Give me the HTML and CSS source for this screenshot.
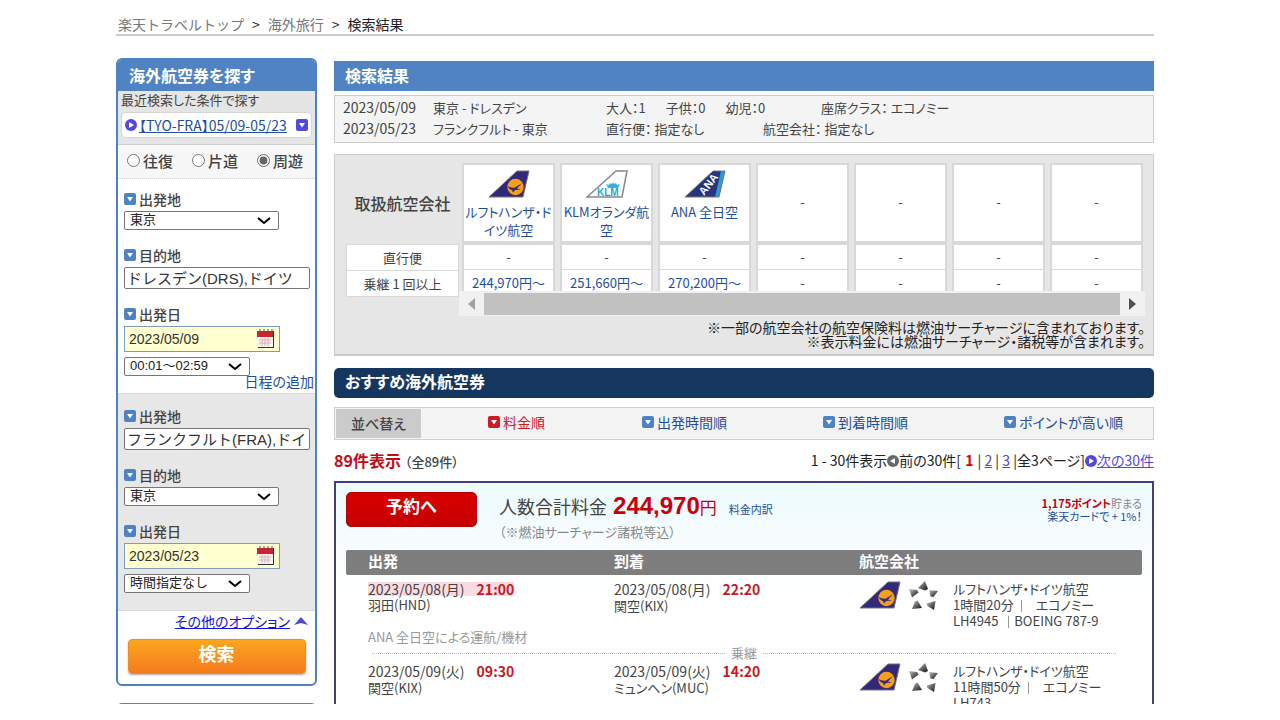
FILE: index.html
```html
<!DOCTYPE html>
<html lang="ja">
<head>
<meta charset="utf-8">
<title>検索結果</title>
<link rel="stylesheet" href="styles.css">
</head>
<body>
<svg class="defs" width="0" height="0" aria-hidden="true">
  <defs>
    <linearGradient id="metal" x1="0" y1="0" x2="1" y2="1"><stop offset="0" stop-color="#ccc"/><stop offset=".5" stop-color="#666"/><stop offset="1" stop-color="#111"/></linearGradient>
    <symbol id="down" viewBox="0 0 12 12"><rect width="12" height="12" rx="2" fill="currentColor"/><path d="M3 4h6L6 8.500z" fill="#fff"/></symbol>
    <symbol id="play" viewBox="0 0 12 12"><circle cx="6" cy="6" r="6" fill="currentColor"/><path d="M4 3v6l5-3z" fill="#fff"/></symbol>
    <symbol id="lh" viewBox="0 0 42 28"><path d="M1 27 29 1h12l-6 26z" fill="#32297b" stroke="#77737c"/><circle cx="27.500" cy="17" r="8.200" fill="#f6a01a"/><path d="M19.500 16c3 1.500 5 2 7.500 1.500l7-4.500-5 5.500 4 1-6 .5-2 2.500-1-2.500c-2-.5-3.500-2-4.500-4z" fill="#32297b"/></symbol>
    <symbol id="star" viewBox="0 0 30 30"><g fill="url(#metal)"><path d="M16 0 9 7l7 2.500 3-1.500z"/><path d="m29 10-9-1 1.500 6.500 3 .5z"/><path d="m25 29 1.500-9-9 2.500 1 2.500z"/><path d="m3 28 10-1-4.500-7.500L6 20.500z"/><path d="m0 8 3 8.500 6.500-5-1.500-2.500z"/></g></symbol>
    <symbol id="cal" viewBox="0 0 18 20"><path d="M1 2h16v17H1z" fill="#333"/><path d="M0 2h16v16H0z" fill="#f7f3f3"/><path d="M0 2h16v6H0z" fill="#d3202c"/><path d="M3 0v4M7 0v4M11 0v4M15 0v4" stroke="#555"/><path d="M2 11h12M2 14h12M5 9v8M8 9v8M11 9v8" stroke="#d9b4b4"/></symbol>
  </defs>
</svg>
<div class="page">
  <nav class="crumbs"><a href="#">楽天トラベルトップ</a><span>&gt;</span><a href="#">海外旅行</a><span>&gt;</span><span>検索結果</span></nav>
  <div class="columns">
    <aside class="side">
      <form class="search">
        <h2 class="search-title">海外航空券を探す</h2>
        <div class="recent">
          <p>最近検索した条件で探す</p>
          <div class="recent-box"><svg class="ico violet"><use href="#play"/></svg><a href="#">【TYO-FRA】05/09-05/23</a><svg class="ico violet"><use href="#down"/></svg></div>
        </div>
        <div class="trip">
          <label><input type="radio" name="trip">往復</label>
          <label><input type="radio" name="trip">片道</label>
          <label><input type="radio" name="trip" checked>周遊</label>
        </div>
        <section class="leg">
          <label class="cap" for="from1"><svg class="ico"><use href="#down"/></svg>出発地</label>
          <select id="from1" class="city"><option>東京</option></select>
          <label class="cap" for="to1"><svg class="ico"><use href="#down"/></svg>目的地</label>
          <input id="to1" class="place" type="text" value="ドレスデン(DRS),ドイツ">
          <label class="cap" for="date1"><svg class="ico"><use href="#down"/></svg>出発日</label>
          <div class="date"><input id="date1" type="text" value="2023/05/09"><button type="button" aria-label="カレンダー"><svg width="18" height="20"><use href="#cal"/></svg></button></div>
          <select class="time" aria-label="時間"><option>00:01～02:59</option></select>
          <a class="add" href="#">日程の追加</a>
        </section>
        <section class="leg second">
          <label class="cap" for="from2"><svg class="ico"><use href="#down"/></svg>出発地</label>
          <input id="from2" class="place" type="text" value="フランクフルト(FRA),ドイツ">
          <label class="cap" for="to2"><svg class="ico"><use href="#down"/></svg>目的地</label>
          <select id="to2" class="city"><option>東京</option></select>
          <label class="cap" for="date2"><svg class="ico"><use href="#down"/></svg>出発日</label>
          <div class="date"><input id="date2" type="text" value="2023/05/23"><button type="button" aria-label="カレンダー"><svg width="18" height="20"><use href="#cal"/></svg></button></div>
          <select class="time" aria-label="時間"><option>時間指定なし</option></select>
        </section>
        <div class="options"><a href="#">その他のオプション</a><svg width="14" height="8" viewBox="0 0 14 8"><path d="M0 8 7 0l7 8-7-2z" fill="#5148d0"/></svg></div>
        <button class="go" type="button">検索</button>
      </form>
      <div class="next-box"></div>
    </aside>
    <main class="main">
      <h1 class="bar">検索結果</h1>
      <div class="info">
        <div class="info-row"><span class="c1">2023/05/09</span><span class="c2">東京 - ドレスデン</span><span class="people"><span>大人：1</span><span>子供：0</span><span>幼児：0</span></span><span>座席クラス： エコノミー</span></div>
        <div class="info-row"><span class="c1">2023/05/23</span><span class="c2">フランクフルト - 東京</span><span class="direct">直行便： 指定なし</span><span>航空会社： 指定なし</span></div>
      </div>
      <section class="fares">
        <div class="fare-cols">
          <table class="heads"><tr><th class="big">取扱航空会社</th></tr><tr><th>直行便</th></tr><tr><th>乗継 1 回以上</th></tr></table>
          <div class="scroller">
            <div class="clip">
              <table class="grid">
                <tr class="logos">
                  <td><svg width="42" height="28"><use href="#lh"/></svg><a href="#">ルフトハンザ・ド<br>イツ航空</a></td>
                  <td><svg width="42" height="28" viewBox="0 0 42 28"><path d="M1 27 30 1h11l-5 26z" fill="#fff" stroke="#888" stroke-width="1.500"/><text x="11" y="26" class="klm">KLM</text><path d="m22 18-2-4 3 1 1-2 2 1 1-2 1 2 2-1 1 2 3-1-2 4z" fill="#36b0e2"/></svg><a href="#">KLMオランダ航<br>空</a></td>
                  <td><svg width="42" height="28" viewBox="0 0 42 28"><path d="M1 27 29 1h12l-6 26z" fill="#27347e"/><path d="M37 1h4l-6 26h-4z" fill="#2a9bd8"/><path d="M1 27 29 1h12l-6 26z" fill="none" stroke="#777"/><text class="ana" transform="translate(20 26) rotate(-52)">ANA</text></svg><a href="#">ANA 全日空</a></td>
                  <td class="none">-</td><td class="none">-</td><td class="none">-</td><td class="none">-</td>
                </tr>
                <tr class="row"><td>-</td><td>-</td><td>-</td><td>-</td><td>-</td><td>-</td><td>-</td></tr>
                <tr class="row last"><td><a href="#">244,970円～</a></td><td><a href="#">251,660円～</a></td><td><a href="#">270,200円～</a></td><td>-</td><td>-</td><td>-</td><td>-</td></tr>
              </table>
            </div>
            <div class="track"><svg class="arrow" viewBox="0 0 7 12"><path d="M7 0v12L0 6z" fill="#a3a3a3"/></svg><div class="thumb"></div><svg class="arrow" viewBox="0 0 7 12"><path d="M0 0v12l7-6z" fill="#505050"/></svg></div>
          </div>
        </div>
        <p class="notes">※一部の航空会社の航空保険料は燃油サーチャージに含まれております。<br>※表示料金には燃油サーチャージ・諸税等が含まれます。</p>
      </section>
      <h2 class="bar navy">おすすめ海外航空券</h2>
      <div class="sort">
        <span class="sort-cap">並べ替え</span>
        <div class="sort-links">
          <a class="on" href="#"><svg class="ico"><use href="#down"/></svg>料金順</a>
          <a href="#"><svg class="ico"><use href="#down"/></svg>出発時間順</a>
          <a href="#"><svg class="ico"><use href="#down"/></svg>到着時間順</a>
          <a href="#"><svg class="ico"><use href="#down"/></svg>ポイントが高い順</a>
        </div>
      </div>
      <div class="count">
        <p class="total"><b>89件表示</b><span>（全89件）</span></p>
        <p class="pager">1 - 30件表示<svg class="ico prev" viewBox="0 0 12 12"><circle cx="6" cy="6" r="6" fill="currentColor"/><path d="M8 3v6L3 6z" fill="#fff"/></svg>前の30件[ <b>1</b> | <a href="#">2</a> | <a href="#">3</a> |全3ページ]<svg class="ico violet"><use href="#play"/></svg><a href="#">次の30件</a></p>
      </div>
      <article class="card">
        <div class="card-top">
          <button class="book" type="button">予約へ</button>
          <div class="price">
            <p class="sum">人数合計料金 <b>244,970</b><span class="yen">円</span><a href="#">料金内訳</a></p>
            <p class="tax">（※燃油サーチャージ諸税等込）</p>
          </div>
          <p class="points"><b>1,175ポイント</b>貯まる<br><a href="#">楽天カードで + 1%！</a></p>
        </div>
        <div class="legs-head"><span>出発</span><span>到着</span><span>航空会社</span></div>
        <div class="flight">
          <p><mark><span class="day">2023/05/08(月)</span><b>21:00</b></mark><br>羽田(HND)</p>
          <p><span class="day">2023/05/08(月)</span><b>22:20</b><br>関空(KIX)</p>
          <div class="carrier"><svg width="42" height="28"><use href="#lh"/></svg><svg width="30" height="30"><use href="#star"/></svg><p>ルフトハンザ・ドイツ航空<br>1時間20分<i></i>エコノミー<br>LH4945 <i class="tight"></i>BOEING 787-9</p></div>
        </div>
        <p class="operated">ANA 全日空による運航/機材</p>
        <div class="transfer">乗継</div>
        <div class="flight">
          <p><span class="day">2023/05/09(火)</span><b>09:30</b><br>関空(KIX)</p>
          <p><span class="day">2023/05/09(火)</span><b>14:20</b><br>ミュンヘン(MUC)</p>
          <div class="carrier"><svg width="42" height="28"><use href="#lh"/></svg><svg width="30" height="30"><use href="#star"/></svg><p>ルフトハンザ・ドイツ航空<br>11時間50分<i></i>エコノミー<br>LH743</p></div>
        </div>
      </article>
    </main>
  </div>
</div>
</body>
</html>
```
FILE: styles.css
```css
* { box-sizing: border-box; }
body { margin: 0; background: #fff; color: #444; font: 14px/20px "Noto Sans CJK JP", sans-serif; font-feature-settings: "palt"; }
h1, h2, p { margin: 0; }
a { color: #1d4f9e; text-decoration: none; }
input, select, button { font-family: "Liberation Sans", "Noto Sans CJK JP", sans-serif; margin: 0; }
.defs { display: block; }
.page { height: calc(100vh - 16px); overflow: hidden; padding: 14px 126px 0 116px; }
.crumbs { display: flex; gap: 8px; height: 22px; border-bottom: 2px solid #ccc; color: #222; font-feature-settings: normal; padding-left: 2px; }
.crumbs a { color: #777; }
.columns { display: flex; align-items: flex-start; gap: 17px; padding-top: 22px; }
.ico { width: 12px; height: 12px; flex: none; color: #4d82c4; }
.violet { color: #5148e0; }

.side { flex: none; width: 201px; }
.search { border: 2px solid #4d82c4; border-radius: 6px; height: 628px; overflow: hidden; }
.search-title { background: #4f83c4; color: #fff; font-size: 16px; line-height: 31px; padding: 0 11px; height: 31px; }
.recent { background: #e5e5e5; height: 54px; padding: 0 3px; border-bottom: 1px solid #d0d0d0; }
.recent p { font-size: 13px; line-height: 18px; }
.recent-box { display: flex; align-items: center; gap: 2px; height: 26px; margin-top: 3px; padding: 0 3px; background: #fff; border: 1px solid #d5d5d5; border-radius: 5px; white-space: nowrap; }
.recent-box a { flex: 1; text-decoration: underline; }
.trip { display: flex; justify-content: space-between; height: 34px; padding: 0 12px 2px 9px; background: #f7f7f7; border-bottom: 1px dotted #ccc; font-size: 15px; font-weight: 500; }
.trip label { display: flex; align-items: center; gap: 3px; }
.trip input { width: 13px; height: 13px; accent-color: #666; }
.leg { display: flex; flex-direction: column; align-items: flex-start; padding: 8px 5px 0 6px; height: 214px; }
.second { height: 218px; padding-top: 10px; background: #e7e7e7; border-top: 1px dotted #ccc; border-bottom: 1px dotted #ccc; }
.cap { display: flex; align-items: center; gap: 3px; height: 24px; padding-bottom: 1px; font-weight: 500; }
.city, .time { height: 19px; padding: 0 5px 2px; border: 1px solid #767676; border-radius: 2px; color: #222; font-size: 13px; appearance: none; background: #fff url("data:image/svg+xml,%3Csvg xmlns='http://www.w3.org/2000/svg' width='14' height='8' fill='none' stroke='black' stroke-width='2'%3E%3Cpath d='M1 1l6 5 6-5'/%3E%3C/svg%3E") no-repeat right 7px center; }
.city { width: 155px; margin-bottom: 13px; }
.time { width: 126px; margin-top: 5px; }
.place { width: 100%; height: 22px; padding: 0 2px 2px; border: 1px solid #767676; border-radius: 2px; background: #fff; color: #333; font-size: 15px; margin-bottom: 13px; }
.date { position: relative; width: 156px; height: 26px; }
.date input { width: 100%; height: 26px; padding: 0 4px; border: 1px solid #7f9db9; background: #ffffcf; color: #333; font-size: 14px; }
.date button { position: absolute; right: 5px; top: 3px; padding: 0; border: 0; background: none; line-height: 0; }
.add { align-self: flex-end; line-height: 10px; margin-right: -4px; }
.options { display: flex; justify-content: flex-end; align-items: center; gap: 4px; padding-right: 7px; height: 20px; }
.options a { color: #1414dd; text-decoration: underline; }
.go { display: block; width: 178px; height: 35px; margin: 8px auto 0; border: 1px solid #f08a24; border-radius: 4px; background: linear-gradient(#fba61e, #f57a1e); color: #fff; font-size: 18px; font-weight: bold; line-height: 30px; padding: 0 0 3px; box-shadow: 0 1px 2px #aaa; }
.next-box { height: 40px; margin-top: 17px; border: 2px solid #4d82c4; border-radius: 6px; }

.main { flex: 1; min-width: 0; padding-top: 3px; }
.bar { height: 30px; padding: 0 11px; background: #4f83c4; color: #fff; font-size: 16px; line-height: 29px; }
.navy { margin-top: 12px; background: #15365f; border-radius: 5px; line-height: 27px; }
.info { height: 48px; margin-top: 4px; padding: 1px 8px; background: #f4f4f4; border: 1px solid #ccc; }
.info-row { display: flex; line-height: 21px; white-space: nowrap; font-size: 13px; }
.c1 { width: 90px; font-size: 14px; }
.c2 { width: 173px; }
.people { display: flex; gap: 20px; width: 215px; }
.direct { width: 157px; }
.fares { height: 202px; margin-top: 11px; padding: 8px 8px 0 11px; background: #e6e6e6; border: 1px solid #ccc; border-bottom-width: 2px; }
.fare-cols { display: flex; align-items: flex-start; }
.heads { flex: none; width: 113px; border-collapse: collapse; }
.heads th { height: 26px; padding: 0; background: #fff; border: 1px solid #d8d8d8; font-weight: normal; font-size: 13px; line-height: 18px; }
.heads .big { height: 81px; background: none; border-color: #e6e6e6; border-bottom-color: #d8d8d8; font-size: 16px; font-weight: 500; padding-bottom: 3px; }
.scroller { flex: 1; min-width: 0; }
.clip { height: 128px; overflow: hidden; }
.grid { width: calc(100% + 5px); margin-left: -2px; table-layout: fixed; border-spacing: 5px 0; }
.grid td { padding: 0; height: 26px; text-align: center; background: #fff; border: 2px solid #d8d8d8; border-bottom: 0; font-size: 13px; line-height: 18px; white-space: nowrap; }
.grid .logos td { height: 80px; border-bottom: 2px solid #d8d8d8; vertical-align: top; padding-top: 5px; }
.grid .logos .none { vertical-align: middle; padding: 0 0 3px; }
.grid .last td { border-top-width: 1px; }
.logos svg { display: block; margin: 0 auto 5px; }
.klm { font: bold 10px "Liberation Sans", sans-serif; fill: #20a8de; }
.ana { font: bold 11px "Liberation Sans", sans-serif; fill: #fff; }
.track { display: flex; align-items: center; height: 25px; background: #f1f1f1; }
.thumb { flex: 1; height: 22px; background: #c1c1c1; }
.arrow { flex: none; width: 7px; height: 12px; margin: 0 9px; }
.notes { padding-top: 4px; line-height: 14px; text-align: right; color: #222; }
.sort { display: flex; height: 33px; margin-top: 9px; padding: 1px; background: #f3f3f3; border: 1px solid #d0d0d0; }
.sort-cap { flex: none; width: 85px; background: #cbcbcb; line-height: 28px; text-align: center; font-weight: 500; }
.sort-links { flex: 1; display: grid; grid-template-columns: 154fr 181fr 181fr 148fr; padding-left: 67px; }
.sort-links a { display: flex; align-items: center; gap: 3px; height: 25px; white-space: nowrap; }
.sort-links .on, .on .ico { color: #cc1c24; }
.count { display: flex; justify-content: space-between; height: 41px; line-height: 40px; }
.total { font-size: 13px; font-weight: 500; }
.total b { font-size: 16px; color: #c00d14; margin-right: 4px; }
.pager { color: #222; }
.pager .ico { vertical-align: -1px; }
.pager .prev { color: #666; }
.pager b { color: #d00; margin: 0 1px; }
.pager a { color: #5148e0; text-decoration: underline; }

.card { border: 2px solid #3f3f80; border-bottom: 0; padding: 9px 10px 0; background: linear-gradient(#edfafe, #fff 110px); }
.card-top { display: flex; height: 58px; }
.book { width: 131px; height: 35px; border: 1px solid #b50000; border-radius: 5px; background: linear-gradient(#d90000, #c60000); color: #fff; font-size: 17px; font-weight: bold; line-height: 30px; padding: 0 0 3px; }
.price { flex: 1; padding-left: 22px; }
.sum { font-size: 18px; line-height: 28px; }
.sum b { font: bold 24px "Liberation Sans", sans-serif; color: #c90008; margin-left: 2px; }
.yen { color: #c90008; font-size: 17px; }
.sum a { font-size: 11px; margin-left: 12px; }
.tax { color: #888; line-height: 17px; font-size: 13px; }
.points { font-size: 11px; line-height: 13px; text-align: right; color: #888; padding-top: 5px; }
.points b { color: #c90008; }
.legs-head, .flight { display: grid; grid-template-columns: 246px 245px 1fr; padding-left: 22px; }
.legs-head { height: 25px; background: #7d7d7d; color: #fff; font-size: 15px; font-weight: bold; line-height: 22px; border-radius: 2px; }
.flight { padding-top: 6px; font-size: 13px; line-height: 16px; }
.day, .flight b { font-size: 14px; }
.flight b { color: #c81822; margin-left: 12px; }
.flight mark { display: inline-block; height: 14px; line-height: 14px; vertical-align: top; margin: 1px 0; background: #fbdbe3; color: inherit; }
.carrier { display: flex; gap: 8px; }
.carrier p { padding-left: 6px; }
.carrier i { display: inline-block; height: 12px; margin: 0 14px 0 7px; border-left: 1px solid #999; vertical-align: -2px; }
.carrier .tight { margin-right: 5px; }
.operated { padding-left: 22px; color: #999; font-size: 13px; line-height: 16px; }
.transfer { display: flex; align-items: center; gap: 6px; margin: 0 26px; color: #999; line-height: 16px; font-size: 13px; }
.transfer::before, .transfer::after { content: ""; flex: 1; border-top: 1px dotted #bbb; }
.transfer + .flight { padding-top: 2px; }
```
